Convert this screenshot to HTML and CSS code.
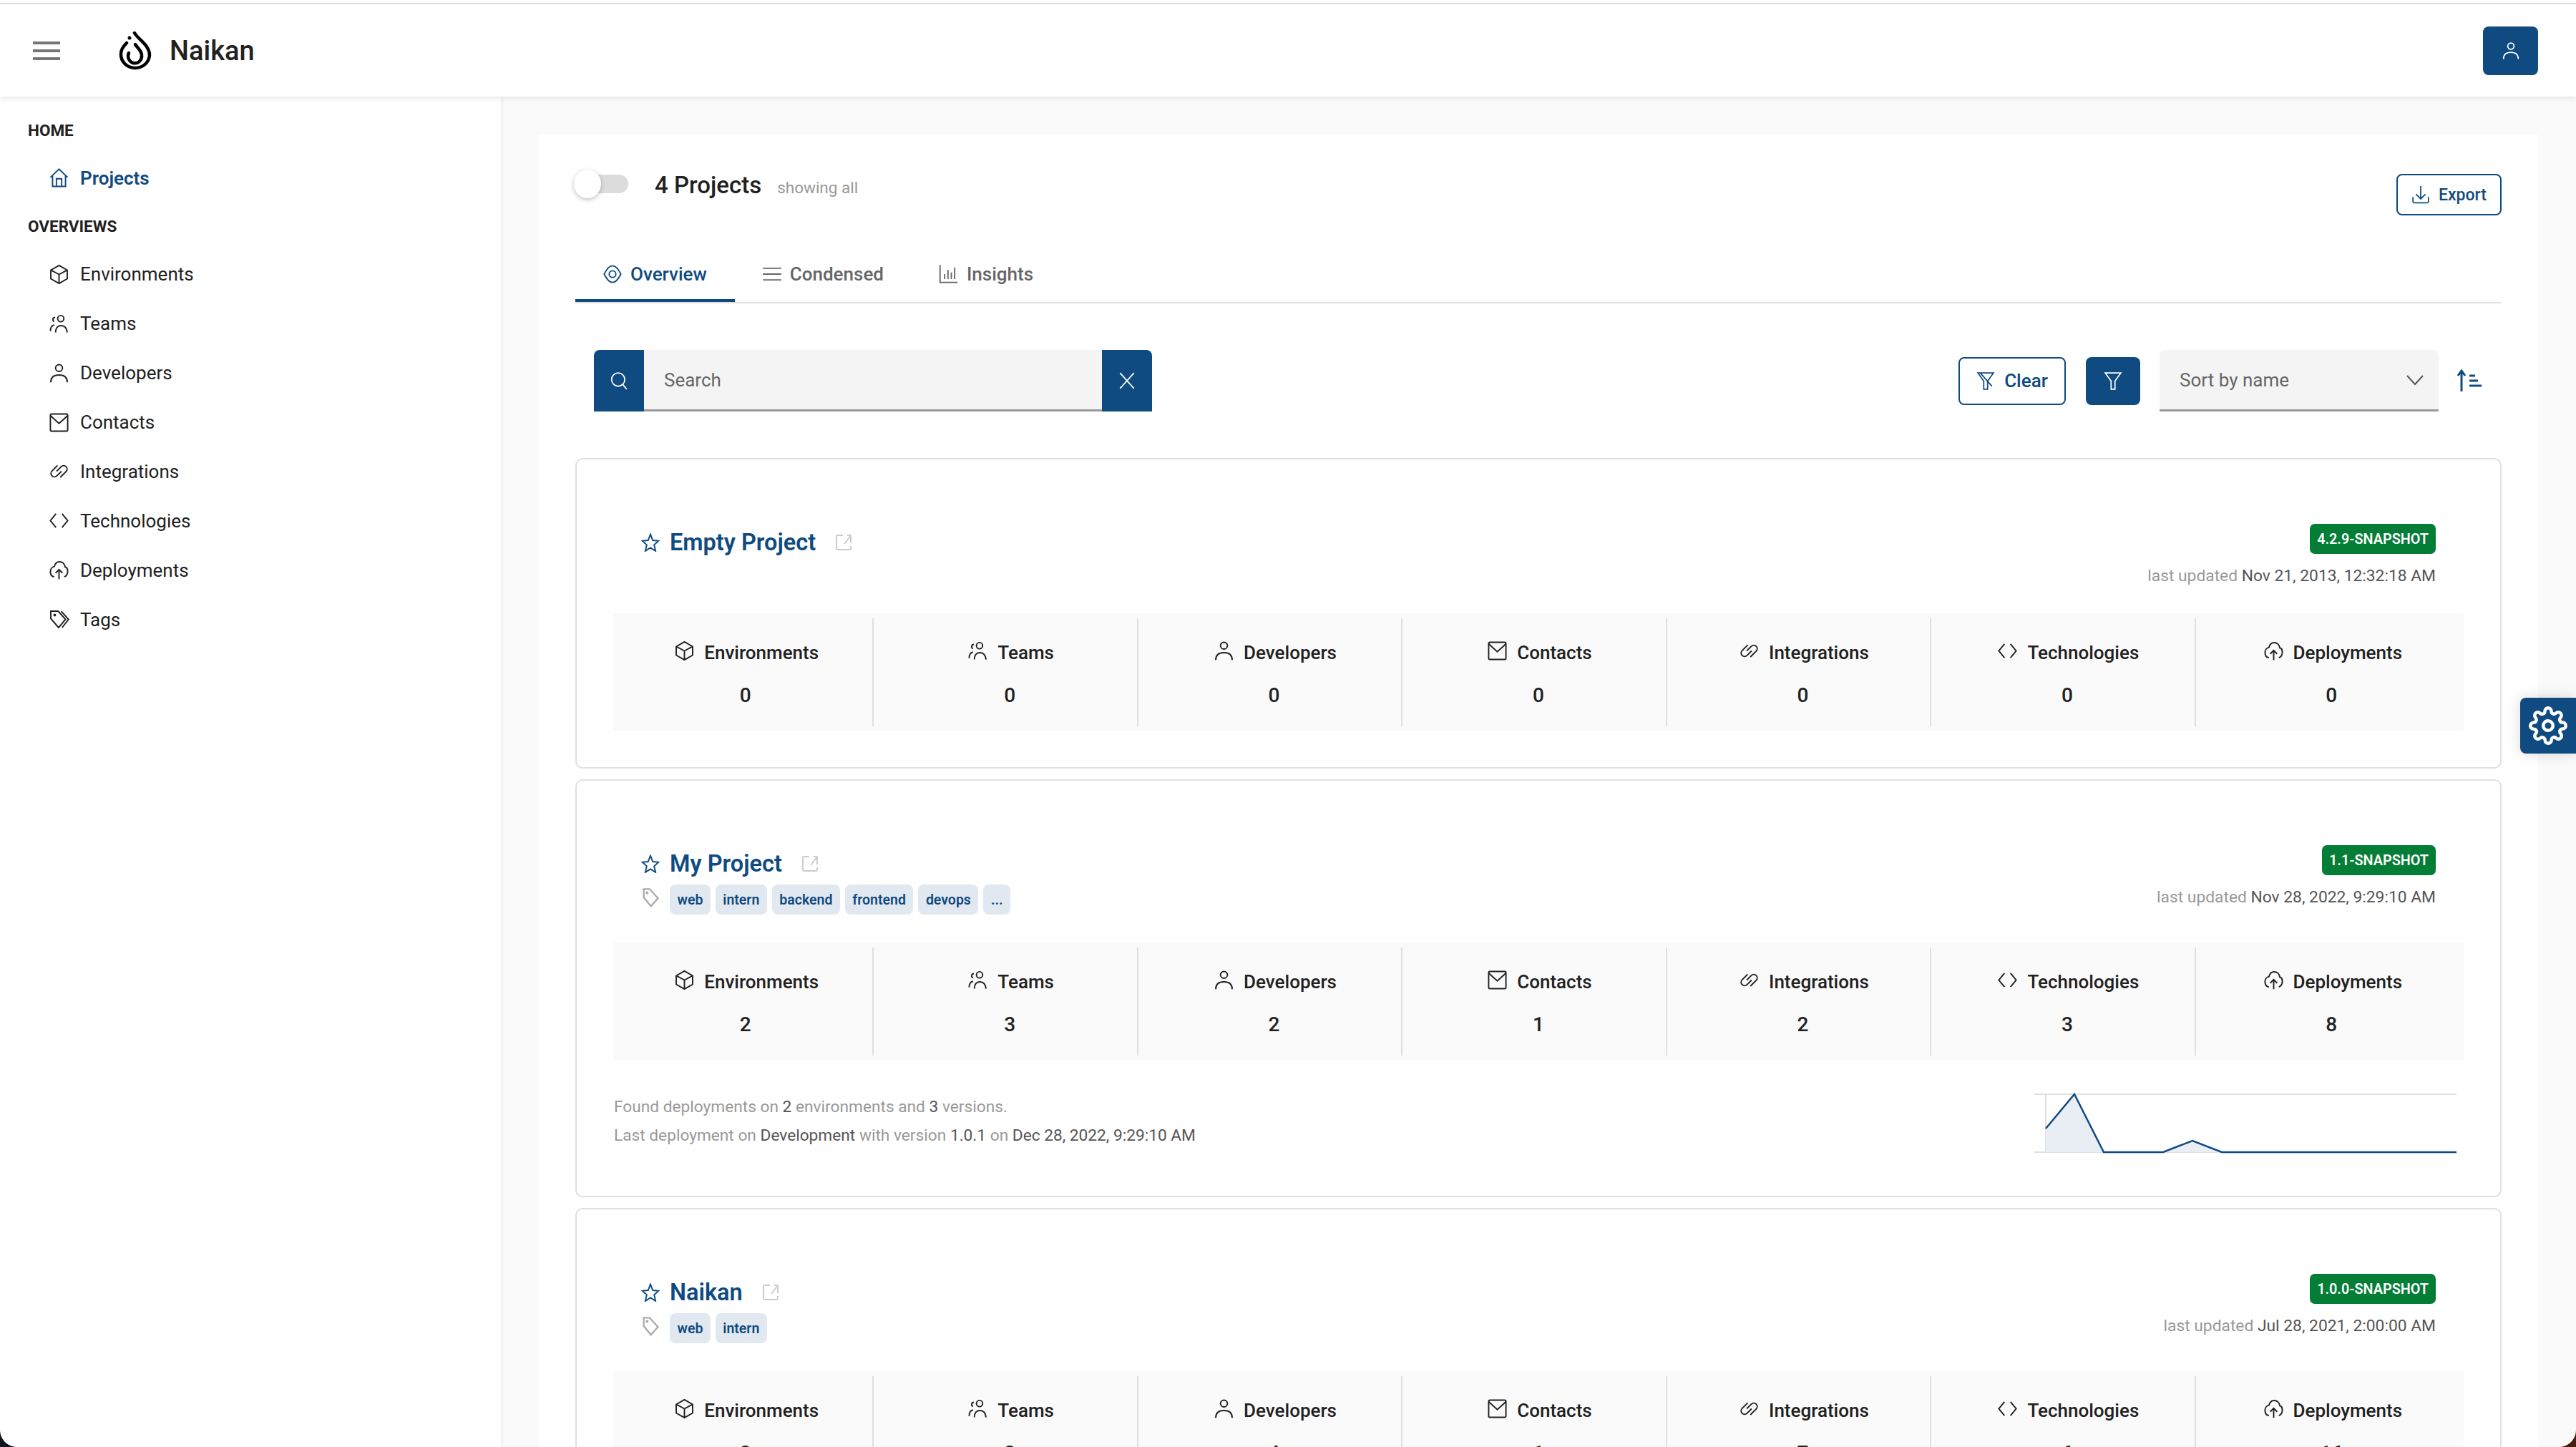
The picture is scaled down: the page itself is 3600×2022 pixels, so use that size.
FILE: index.html
```html
<!DOCTYPE html>
<html lang="en">
<head>
  <meta charset="UTF-8" />
  <title>Naikan</title>
  <link rel="stylesheet" href="styles.css">
</head>
<body>
  <svg class="sprite" xmlns="http://www.w3.org/2000/svg">
    <symbol id="i-home" viewBox="0 0 24 24"><path d="M2 11.500 12 2l10 9.500M4.500 9.500V22h15V9.500M9 22v-9h6v9"/></symbol>
    <symbol id="i-cube" viewBox="0 0 24 24"><path d="M12 1.500 21.500 7v10L12 22.500 2.500 17V7zM2.500 7 12 12l9.500-5M12 12v10.500"/></symbol>
    <symbol id="i-teams" viewBox="0 0 24 24"><circle cx="14" cy="6" r="3.600"/><path d="M8 22c0-5 2.500-8 6.500-8s6.500 3 7 8M7.500 4.500a2.600 2.600 0 0 0-1 5M2 20.500c0-4 1.500-6.500 4.500-7"/></symbol>
    <symbol id="i-user" viewBox="0 0 24 24"><circle cx="12" cy="6" r="4"/><path d="M2.500 22.500c0-5.500 3.500-8.500 9.500-8.500s9.500 3 9.500 8.500"/></symbol>
    <symbol id="i-mail" viewBox="0 0 24 24"><rect x="2" y="2" width="20" height="20" rx="1.500"/><path d="m2 4 10 9 10-9"/></symbol>
    <symbol id="i-link" viewBox="0 0 24 24"><g transform="rotate(-45 12 12)"><path d="M15.500 6H6.500a4 4 0 0 0 0 8H14"/><path d="M8 18h9.500a4 4 0 0 0 0-8H10"/></g></symbol>
    <symbol id="i-code" viewBox="0 0 24 24"><path d="M8.500 4 2 12l6.500 8M15.500 4 22 12l-6.500 8"/></symbol>
    <symbol id="i-cloud" viewBox="0 0 24 24"><path d="M6.500 20C3.500 19.500 2 17 2 14c0-3 2-5.500 4.500-6C7.500 4.500 10 2.500 12.500 2.500c3.500 0 6 2.500 6.500 6 2 .5 3 2.500 3 5 0 3-1.500 5.500-4 6.500M12 22.500V11.500M8 15.500l4-4 4 4"/></symbol>
    <symbol id="i-tags" viewBox="0 0 24 24"><path d="M2.500 2.500H11l8.500 9.500-8 9.500-9-10.500zM14.500 2.500 23 12l-7.500 9.500"/><circle cx="7" cy="7" r=".8"/></symbol>
    <symbol id="i-tag" viewBox="0 0 24 24"><path d="M4 2h7l10 11-8.500 9.500L4 12z"/><circle cx="8" cy="6.500" r=".8"/></symbol>
    <symbol id="i-star" viewBox="0 0 24 24"><path d="M12 1.500l3 7.800 7.500.6-5.700 5.200 1.800 7.900-6.600-4.200L5.400 23l1.800-7.900L1.500 9.900 9 9.300z"/></symbol>
    <symbol id="i-external" viewBox="0 0 24 24"><path d="M11 2H4a2 2 0 0 0-2 2v16a2 2 0 0 0 2 2h16a2 2 0 0 0 2-2v-3M22 13V2M22 2h-5M22 2l-9 12"/></symbol>
    <symbol id="i-eye" viewBox="0 0 24 24"><path d="M12 2c4.500 0 7.500 5 10 10-2.500 5-5.500 10-10 10S4.500 17 2 12C4.500 7 7.500 2 12 2z"/><circle cx="12" cy="12" r="4"/></symbol>
    <symbol id="i-menu" viewBox="0 0 38 26"><path d="M0 2h38M0 13h38M0 24h38"/></symbol>
    <symbol id="i-list" viewBox="0 0 24 24"><path d="M1 5h22M1 12h22M1 19h22"/></symbol>
    <symbol id="i-bars" viewBox="0 0 24 24"><path d="M1.500 1v21h21M7 18v-6M11 18V7M15 18v-8M19 18V4"/></symbol>
    <symbol id="i-search" viewBox="0 0 24 24"><circle cx="11" cy="10.500" r="8.500"/><path d="m17 17 5 6"/></symbol>
    <symbol id="i-close" viewBox="0 0 24 24"><path d="M3 2l18 20M21 2 3 22"/></symbol>
    <symbol id="i-download" viewBox="0 0 24 24"><path d="M12 1v16M6 11.500l6 6 6-6M2 15v6a1.500 1.500 0 0 0 1.500 1.500h17A1.500 1.500 0 0 0 22 21v-6"/></symbol>
    <symbol id="i-filter" viewBox="0 0 24 24"><path d="M2 2h20l-7.500 10.500V23h-5V12.500z"/></symbol>
    <symbol id="i-filter-off" viewBox="0 0 24 24"><path d="M2 2h20l-7.500 10.500V23h-5V12.500zM5 2l15 17"/></symbol>
    <symbol id="i-chevron" viewBox="0 0 24 24"><path d="m1 6 11 12L23 6"/></symbol>
    <symbol id="i-sort" viewBox="0 0 36 32"><path d="M7 31V2M2 9l5-7 5 7M18 9h8M18 16h12M18 23h17"/></symbol>
    <symbol id="i-gear" viewBox="0 0 24 24"><circle cx="12" cy="12" r="3"/><path d="M19.400 15a1.650 1.650 0 0 0 .33 1.820l.06.06a2 2 0 0 1 0 2.830 2 2 0 0 1-2.830 0l-.06-.06a1.650 1.650 0 0 0-1.820-.33 1.650 1.650 0 0 0-1 1.510V21a2 2 0 0 1-2 2 2 2 0 0 1-2-2v-.09A1.650 1.650 0 0 0 9 19.400a1.650 1.650 0 0 0-1.820.33l-.06.06a2 2 0 0 1-2.830 0 2 2 0 0 1 0-2.830l.06-.06a1.650 1.650 0 0 0 .33-1.820 1.650 1.650 0 0 0-1.510-1H3a2 2 0 0 1-2-2 2 2 0 0 1 2-2h.09A1.650 1.650 0 0 0 4.600 9a1.650 1.650 0 0 0-.33-1.820l-.06-.06a2 2 0 0 1 0-2.830 2 2 0 0 1 2.830 0l.06.06a1.650 1.650 0 0 0 1.820.33H9a1.650 1.650 0 0 0 1-1.510V3a2 2 0 0 1 2-2 2 2 0 0 1 2 2v.09a1.650 1.650 0 0 0 1 1.510 1.650 1.650 0 0 0 1.820-.33l.06-.06a2 2 0 0 1 2.830 0 2 2 0 0 1 0 2.830l-.06.06a1.650 1.650 0 0 0-.33 1.820V9a1.650 1.650 0 0 0 1.510 1H21a2 2 0 0 1 2 2 2 2 0 0 1-2 2h-.09a1.650 1.650 0 0 0-1.510 1z"/></symbol>
  </svg>

  <div class="page">
    <header class="topbar">
      <svg class="menu-icon"><use href="#i-menu"/></svg>
      <svg class="logo" viewBox="0 0 46 54">
        <path d="M22 2c5 9 21 17 21 31a20 19 0 1 1-40-2c0-5 4-11 8-15"/>
        <path d="M23 18c3 5 9 9 9 15a9.500 10 0 1 1-18-3"/>
        <circle class="logo-dot" cx="15" cy="9" r="2.500"/>
      </svg>
      <span class="brand">Naikan</span>
      <button class="btn-solid user-btn"><svg class="icon"><use href="#i-user"/></svg></button>
    </header>

    <div class="layout">
      <aside class="sidebar">
        <div class="nav-title">HOME</div>
        <a class="nav-item active"><svg class="icon"><use href="#i-home"/></svg>Projects</a>
        <div class="nav-title">OVERVIEWS</div>
        <a class="nav-item"><svg class="icon"><use href="#i-cube"/></svg>Environments</a>
        <a class="nav-item"><svg class="icon"><use href="#i-teams"/></svg>Teams</a>
        <a class="nav-item"><svg class="icon"><use href="#i-user"/></svg>Developers</a>
        <a class="nav-item"><svg class="icon"><use href="#i-mail"/></svg>Contacts</a>
        <a class="nav-item"><svg class="icon"><use href="#i-link"/></svg>Integrations</a>
        <a class="nav-item"><svg class="icon"><use href="#i-code"/></svg>Technologies</a>
        <a class="nav-item"><svg class="icon"><use href="#i-cloud"/></svg>Deployments</a>
        <a class="nav-item"><svg class="icon"><use href="#i-tags"/></svg>Tags</a>
      </aside>

      <main class="main">
        <section class="panel">
          <div class="panel-head">
            <div class="panel-title">
              <span class="toggle"><span class="toggle-knob"></span></span>
              <h1>4 Projects</h1>
              <span class="showing">showing all</span>
            </div>
            <button class="btn-outline export-btn"><svg class="icon"><use href="#i-download"/></svg>Export</button>
          </div>

          <nav class="tabs">
            <a class="tab active"><svg class="icon"><use href="#i-eye"/></svg>Overview</a>
            <a class="tab"><svg class="icon"><use href="#i-list"/></svg>Condensed</a>
            <a class="tab"><svg class="icon"><use href="#i-bars"/></svg>Insights</a>
          </nav>

          <div class="toolbar">
            <div class="search">
              <span class="search-btn"><svg class="icon"><use href="#i-search"/></svg></span>
              <span class="search-input">Search</span>
              <span class="search-btn"><svg class="icon"><use href="#i-close"/></svg></span>
            </div>
            <div class="tools">
              <button class="btn-outline clear-btn"><svg class="icon"><use href="#i-filter-off"/></svg>Clear</button>
              <button class="btn-solid filter-btn"><svg class="icon"><use href="#i-filter"/></svg></button>
              <div class="select">Sort by name<svg class="chevron"><use href="#i-chevron"/></svg></div>
              <svg class="sort-icon"><use href="#i-sort"/></svg>
            </div>
          </div>

          <article class="card">
            <div class="card-head">
              <div class="card-name">
                <div class="name-row">
                  <svg class="star"><use href="#i-star"/></svg>
                  <a class="name">Empty Project</a>
                  <svg class="external"><use href="#i-external"/></svg>
                </div>
              </div>
              <div class="card-meta">
                <span class="badge">4.2.9-SNAPSHOT</span>
                <div class="updated">last updated <b>Nov 21, 2013, 12:32:18 AM</b></div>
              </div>
            </div>
            <div class="stats">
              <div class="stat"><div class="stat-label"><svg class="icon"><use href="#i-cube"/></svg>Environments</div><div class="stat-value">0</div></div>
              <div class="stat"><div class="stat-label"><svg class="icon"><use href="#i-teams"/></svg>Teams</div><div class="stat-value">0</div></div>
              <div class="stat"><div class="stat-label"><svg class="icon"><use href="#i-user"/></svg>Developers</div><div class="stat-value">0</div></div>
              <div class="stat"><div class="stat-label"><svg class="icon"><use href="#i-mail"/></svg>Contacts</div><div class="stat-value">0</div></div>
              <div class="stat"><div class="stat-label"><svg class="icon"><use href="#i-link"/></svg>Integrations</div><div class="stat-value">0</div></div>
              <div class="stat"><div class="stat-label"><svg class="icon"><use href="#i-code"/></svg>Technologies</div><div class="stat-value">0</div></div>
              <div class="stat"><div class="stat-label"><svg class="icon"><use href="#i-cloud"/></svg>Deployments</div><div class="stat-value">0</div></div>
            </div>
          </article>

          <article class="card">
            <div class="card-head">
              <div class="card-name">
                <div class="name-row">
                  <svg class="star"><use href="#i-star"/></svg>
                  <a class="name">My Project</a>
                  <svg class="external"><use href="#i-external"/></svg>
                </div>
                <div class="tag-row">
                  <svg class="tag-icon"><use href="#i-tag"/></svg>
                  <span class="chip">web</span>
                  <span class="chip">intern</span>
                  <span class="chip">backend</span>
                  <span class="chip">frontend</span>
                  <span class="chip">devops</span>
                  <span class="chip">...</span>
                </div>
              </div>
              <div class="card-meta">
                <span class="badge">1.1-SNAPSHOT</span>
                <div class="updated">last updated <b>Nov 28, 2022, 9:29:10 AM</b></div>
              </div>
            </div>
            <div class="stats">
              <div class="stat"><div class="stat-label"><svg class="icon"><use href="#i-cube"/></svg>Environments</div><div class="stat-value">2</div></div>
              <div class="stat"><div class="stat-label"><svg class="icon"><use href="#i-teams"/></svg>Teams</div><div class="stat-value">3</div></div>
              <div class="stat"><div class="stat-label"><svg class="icon"><use href="#i-user"/></svg>Developers</div><div class="stat-value">2</div></div>
              <div class="stat"><div class="stat-label"><svg class="icon"><use href="#i-mail"/></svg>Contacts</div><div class="stat-value">1</div></div>
              <div class="stat"><div class="stat-label"><svg class="icon"><use href="#i-link"/></svg>Integrations</div><div class="stat-value">2</div></div>
              <div class="stat"><div class="stat-label"><svg class="icon"><use href="#i-code"/></svg>Technologies</div><div class="stat-value">3</div></div>
              <div class="stat"><div class="stat-label"><svg class="icon"><use href="#i-cloud"/></svg>Deployments</div><div class="stat-value">8</div></div>
            </div>
            <div class="card-foot">
              <div class="foot-text">
                <div>Found deployments on <b>2</b> environments and <b>3</b> versions.</div>
                <div>Last deployment on <b>Development</b> with version <b>1.0.1</b> on <b>Dec 28, 2022, 9:29:10 AM</b></div>
              </div>
              <svg class="chart" viewBox="0 0 590 93">
                <path class="chart-grid" d="M0 2H590M0 83H590M16 2V83"/>
                <path class="chart-area" d="M16 50 56 2 97 83H180L221 67 262 83H16z"/>
                <path class="chart-line" d="M16 50 56 2 97 83H180L221 67 262 83H590"/>
              </svg>
            </div>
          </article>

          <article class="card">
            <div class="card-head">
              <div class="card-name">
                <div class="name-row">
                  <svg class="star"><use href="#i-star"/></svg>
                  <a class="name">Naikan</a>
                  <svg class="external"><use href="#i-external"/></svg>
                </div>
                <div class="tag-row">
                  <svg class="tag-icon"><use href="#i-tag"/></svg>
                  <span class="chip">web</span>
                  <span class="chip">intern</span>
                </div>
              </div>
              <div class="card-meta">
                <span class="badge">1.0.0-SNAPSHOT</span>
                <div class="updated">last updated <b>Jul 28, 2021, 2:00:00 AM</b></div>
              </div>
            </div>
            <div class="stats">
              <div class="stat"><div class="stat-label"><svg class="icon"><use href="#i-cube"/></svg>Environments</div><div class="stat-value">2</div></div>
              <div class="stat"><div class="stat-label"><svg class="icon"><use href="#i-teams"/></svg>Teams</div><div class="stat-value">3</div></div>
              <div class="stat"><div class="stat-label"><svg class="icon"><use href="#i-user"/></svg>Developers</div><div class="stat-value">4</div></div>
              <div class="stat"><div class="stat-label"><svg class="icon"><use href="#i-mail"/></svg>Contacts</div><div class="stat-value">1</div></div>
              <div class="stat"><div class="stat-label"><svg class="icon"><use href="#i-link"/></svg>Integrations</div><div class="stat-value">7</div></div>
              <div class="stat"><div class="stat-label"><svg class="icon"><use href="#i-code"/></svg>Technologies</div><div class="stat-value">6</div></div>
              <div class="stat"><div class="stat-label"><svg class="icon"><use href="#i-cloud"/></svg>Deployments</div><div class="stat-value">16</div></div>
            </div>
          </article>
        </section>
      </main>
    </div>

    <button class="settings-btn"><svg class="gear"><use href="#i-gear"/></svg></button>
    <span class="corner corner-left"></span>
    <span class="corner corner-right"></span>
  </div>
</body>
</html>
```

FILE: styles.css
```css
* {
  box-sizing: border-box;
}

html, body {
  margin: 0;
  height: 100%;
}

body {
  font-family: Roboto, "Liberation Sans", sans-serif;
  font-size: 26px;
  color: #212121;
  background: #fafafa;
  overflow: hidden;
}

.sprite {
  display: none;
}

svg {
  fill: none;
  stroke: currentColor;
  stroke-width: 1.6;
  flex-shrink: 0;
}

button {
  font: inherit;
  cursor: pointer;
}

.icon {
  width: 26px;
  height: 26px;
}

.page {
  position: relative;
  height: 2022px;
  overflow: hidden;
  padding-top: 4px;
  background: #fff;
}

/* top bar */
.topbar {
  position: relative;
  z-index: 2;
  display: flex;
  align-items: center;
  height: 131px;
  padding: 0 53px 0 46px;
  background: #fff;
  border-top: 2px solid #dedede;
  box-shadow: 0 2px 8px rgba(0, 0, 0, 0.1);
}

.menu-icon {
  width: 38px;
  height: 26px;
  color: #757575;
  stroke-width: 4;
}

.logo {
  width: 46px;
  height: 54px;
  margin-left: 82px;
  color: #000;
  stroke-width: 4.500;
  stroke-linecap: round;
}

.logo-dot {
  fill: #000;
  stroke: none;
}

.brand {
  margin-left: 25px;
  font-size: 38px;
  font-weight: 500;
}

.btn-solid {
  display: flex;
  align-items: center;
  justify-content: center;
  border: none;
  border-radius: 8px;
  background: #0f4a80;
  color: #fff;
}

.btn-outline {
  display: flex;
  align-items: center;
  justify-content: center;
  background: #fff;
  border: 2px solid #0f4a80;
  border-radius: 8px;
  color: #0f4a80;
  font-weight: 500;
}

.user-btn {
  width: 77px;
  height: 68px;
  margin-left: auto;
}

/* sidebar */
.layout {
  display: flex;
  height: 1887px;
}

.sidebar {
  position: relative;
  z-index: 1;
  width: 700px;
  flex-shrink: 0;
  padding: 14px 0 0 39px;
  background: #fff;
  box-shadow: 2px 0 4px rgba(0, 0, 0, 0.05);
}

.nav-title {
  display: flex;
  align-items: center;
  height: 65.500px;
  font-size: 22.500px;
  font-weight: 700;
}

.nav-item {
  display: flex;
  align-items: center;
  gap: 15px;
  height: 68.900px;
  padding-left: 29px;
}

.nav-item .icon {
  width: 29px;
  height: 29px;
}

.nav-item.active {
  color: #0f4a80;
  font-weight: 600;
}

/* main panel */
.main {
  flex: 1;
  padding: 53px 53px 0;
  background: #fafafa;
}

.panel {
  padding: 55px 51px 0;
  background: #fff;
}

.panel-head {
  display: flex;
  justify-content: space-between;
  align-items: flex-start;
  height: 58px;
}

.panel-title {
  display: flex;
  align-items: baseline;
  height: 28px;
  margin-top: 2px;
}

.toggle {
  position: relative;
  align-self: center;
  width: 74px;
  height: 26px;
  margin: -4px 37px 0 0;
  border-radius: 13px;
  background: #dcdcdc;
}

.toggle-knob {
  position: absolute;
  left: -2px;
  top: -7px;
  width: 38px;
  height: 40px;
  border-radius: 50%;
  background: #fff;
  box-shadow: 0 2px 6px rgba(0, 0, 0, 0.25);
}

h1 {
  margin: 0;
  font-size: 33px;
  font-weight: 500;
  line-height: 28px;
}

.showing {
  margin-left: 22px;
  font-size: 22.500px;
  color: #999;
}

.export-btn {
  gap: 12px;
  width: 147px;
  height: 58px;
  font-size: 23px;
}

.tabs {
  display: flex;
  height: 80px;
  margin-top: 43px;
  border-bottom: 2px solid #e0e0e0;
}

.tab {
  display: flex;
  align-items: center;
  gap: 11px;
  height: 78px;
  padding: 0 39px 0 38px;
  color: #666;
  font-weight: 500;
}

.tab .icon {
  width: 28px;
  height: 28px;
}

.tab.active {
  padding-top: 4px;
  color: #0f4a80;
  border-bottom: 4px solid #0f4a80;
}

/* search and sort */
.toolbar {
  display: flex;
  justify-content: space-between;
  align-items: center;
  margin: 65px 27px 65px 26px;
}

.search {
  display: flex;
  width: 780px;
  height: 86px;
}

.search-btn {
  display: flex;
  align-items: center;
  justify-content: center;
  width: 70px;
  background: #0f4a80;
  color: #fff;
}

.search-btn:first-child {
  border-top-left-radius: 8px;
}

.search-btn:last-child {
  border-top-right-radius: 8px;
}

.search-input {
  display: flex;
  align-items: center;
  flex: 1;
  padding-left: 28px;
  background: #f4f4f4;
  border-bottom: 3px solid #999;
  color: #666;
}

.tools {
  display: flex;
  align-items: center;
}

.clear-btn {
  gap: 13px;
  width: 150px;
  height: 67px;
}

.filter-btn {
  width: 76px;
  height: 67px;
  margin-left: 28px;
}

.select {
  display: flex;
  align-items: center;
  justify-content: space-between;
  width: 390px;
  height: 86px;
  margin-left: 27px;
  padding: 0 21px 0 28px;
  background: #f4f4f4;
  border-bottom: 3px solid #999;
  border-radius: 8px 8px 0 0;
  color: #666;
}

.chevron {
  width: 24px;
  height: 24px;
  color: #555;
  stroke-width: 2;
}

.sort-icon {
  width: 36px;
  height: 32px;
  margin-left: 25px;
  color: #0f4a80;
  stroke-width: 3;
}

/* project cards */
.card {
  margin-bottom: 15px;
  padding: 90px 51px 51px;
  border: 2px solid #e0e0e0;
  border-radius: 10px;
}

.card-head {
  display: flex;
  justify-content: space-between;
  align-items: flex-start;
  margin-bottom: 38px;
  padding: 0 39px;
}

.card-name {
  padding: 2px 0 1px;
}

.name-row {
  display: flex;
  align-items: center;
  height: 48px;
}

.star {
  width: 26px;
  height: 26px;
  margin-right: 14px;
  color: #0f4a80;
  stroke-width: 1.800;
}

.name {
  font-size: 32.500px;
  font-weight: 600;
  color: #0f4a80;
}

.external {
  width: 24px;
  height: 24px;
  margin-left: 27px;
  color: #ccc;
  stroke-width: 2;
}

.tag-row {
  display: flex;
  align-items: center;
  gap: 7px;
  margin-top: 5px;
}

.tag-icon {
  width: 28px;
  height: 28px;
  margin: -6px 6px 0 -1px;
  color: #aaa;
  stroke-width: 2;
}

.chip {
  display: flex;
  align-items: center;
  height: 42px;
  padding: 0 10.500px;
  border-radius: 8px;
  background: #e2e8f0;
  color: #0f4a80;
  font-size: 19.500px;
  font-weight: 600;
}

.card-meta {
  display: flex;
  flex-direction: column;
  align-items: flex-end;
}

.badge {
  display: flex;
  align-items: center;
  height: 42px;
  padding: 0 10px;
  border-radius: 7px;
  background: #047e36;
  color: #fff;
  font-size: 19.800px;
  font-weight: 600;
}

.updated {
  margin-top: 17px;
  font-size: 22.800px;
  line-height: 28px;
  color: #999;
}

.updated b, .foot-text b {
  font-weight: 400;
  color: #555;
}

.stats {
  display: grid;
  grid-template-columns: repeat(7, 1fr);
  padding: 7px 0 6px;
  background: #fafafa;
}

.stat {
  position: relative;
  height: 151px;
  padding-top: 32px;
  text-align: center;
}

/* the dividers sit a bit left of the column edge */
.stat + .stat::before {
  content: "";
  position: absolute;
  left: -7px;
  top: 0;
  bottom: 0;
  width: 2px;
  background: #e0e0e0;
}

.stat-label {
  display: flex;
  align-items: center;
  justify-content: center;
  gap: 13px;
  height: 32px;
  padding-left: 3px;
  font-weight: 500;
}

.stat-label .icon {
  width: 29px;
  height: 29px;
  margin-bottom: 5px;
}

.stat-value {
  margin-top: 28px;
  font-size: 28px;
  line-height: 32px;
  font-weight: 500;
}

.card-foot {
  display: flex;
  justify-content: space-between;
  margin: 46px 10px 0 1px;
}

.foot-text {
  font-size: 22.700px;
  line-height: 40px;
  color: #999;
}

.chart {
  width: 590px;
  height: 93px;
}

.chart-grid {
  stroke: #e0e0e0;
  stroke-width: 2;
}

.chart-area {
  fill: #e9eef5;
  stroke: none;
}

.chart-line {
  stroke: #0f4a80;
  stroke-width: 2.500;
}

/* overlays */
.settings-btn {
  position: absolute;
  right: 0;
  top: 975px;
  z-index: 3;
  display: flex;
  align-items: center;
  justify-content: center;
  width: 78px;
  height: 78px;
  border: none;
  border-radius: 8px 0 0 8px;
  background: #0f4a80;
  color: #fff;
  box-shadow: 0 0 20px rgba(0, 0, 0, 0.15);
}

.gear {
  width: 54px;
  height: 54px;
  stroke-width: 2;
}

.corner {
  position: absolute;
  bottom: 0;
  z-index: 4;
  width: 24px;
  height: 24px;
}

.corner-left {
  left: 0;
  background: radial-gradient(circle at 100% 0, transparent 23.500px, #10141f 24.500px);
}

.corner-right {
  right: 0;
  background: radial-gradient(circle at 0 0, transparent 23.500px, #4a1d0c 24.500px);
}
```
